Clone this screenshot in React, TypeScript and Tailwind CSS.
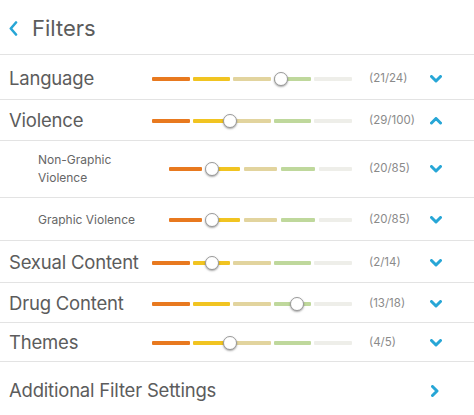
import React from "react";

const COLORS = ["#e8791f", "#f1c421", "#e2d49e", "#bfd89c", "#eeeee9"];

function Chevron({ dir }: { dir: "down" | "up" | "right" | "left" }) {
  if (dir === "left") {
    return (
      <svg width="9" height="15" viewBox="0 0 9 15">
        <polyline points="7,1.5 1.8,7.5 7,13.5" fill="none" stroke="#27a6d6" strokeWidth="2.6" strokeLinecap="round" strokeLinejoin="round" />
      </svg>
    );
  }
  const pts =
    dir === "down"
      ? "1.5,1.5 6,6 10.5,1.5"
      : dir === "up"
      ? "1.5,6 6,1.5 10.5,6"
      : "1.5,1.5 6,6 1.5,10.5";
  const w = dir === "down" || dir === "up" ? 12 : 8;
  const h = dir === "down" || dir === "up" ? 8 : 12;
  return (
    <svg width={w} height={h} viewBox={`0 0 ${w} ${h}`}>
      <polyline points={pts} fill="none" stroke="#27a6d6" strokeWidth="3" strokeLinecap="round" strokeLinejoin="round" />
    </svg>
  );
}

function Slider({ thumb, sub }: { thumb: number; sub?: boolean }) {
  return (
    <div className={`relative flex items-center ${sub ? "w-[183px] gap-[4px]" : "w-[200px] gap-[3px]"} h-[16px]`}>
      {COLORS.map((c, i) => (
        <div key={i} className="flex-1 h-[4px] rounded-[1px]" style={{ backgroundColor: c }} />
      ))}
      <div
        className="absolute top-[1px] w-[14px] h-[14px] rounded-full bg-white border border-[#9a9a9a] shadow-[0_1px_2px_rgba(0,0,0,0.35)]"
        style={{ left: thumb - 7 }}
      />
    </div>
  );
}

function Row({
  label,
  thumb,
  count,
  dir,
  h,
  sub,
}: {
  label: React.ReactNode;
  thumb: number;
  count: string;
  dir: "down" | "up";
  h: string;
  sub?: boolean;
}) {
  return (
    <div className={`flex items-center border-b border-[#e3e3e3] ${h}`}>
      {sub ? (
        <div className="pl-[38px] w-[169px] text-[12px] leading-[18px] text-[#666]">{label}</div>
      ) : (
        <div className="pl-[9px] w-[152px] text-[18.5px] text-[#5c5c5c] tracking-[-0.2px]">{label}</div>
      )}
      <Slider thumb={thumb} sub={sub} />
      <div className="ml-[17px] w-[60px] text-[11.5px] text-[#8a8a8a]">{count}</div>
      <div className="ml-[1px] flex w-[12px] justify-center">
        <Chevron dir={dir} />
      </div>
    </div>
  );
}

export default function App() {
  return (
    <div className="w-[474px] h-[415px] bg-white overflow-hidden" style={{ fontFamily: "Inter, 'Noto Sans', sans-serif" }}>
      <div className="flex items-center h-[55px] border-b border-[#e3e3e3] pt-[2px]">
        <div className="pl-[9px] pr-[14px] flex items-center">
          <Chevron dir="left" />
        </div>
        <div className="text-[22px] text-[#5c5c5c]">Filters</div>
      </div>
      <Row label="Language" thumb={129} count="(21/24)" dir="down" h="h-[45px] pt-[4px]" />
      <Row label="Violence" thumb={78} count="(29/100)" dir="up" h="h-[41px] pt-[1px]" />
      <Row
        label={
          <>
            Non-Graphic
            <br />
            Violence
          </>
        }
        thumb={43}
        count="(20/85)"
        dir="down"
        h="h-[57px]"
        sub
      />
      <Row label="Graphic Violence" thumb={43} count="(20/85)" dir="down" h="h-[43px] pt-[1px]" sub />
      <Row label="Sexual Content" thumb={60} count="(2/14)" dir="down" h="h-[42px] pt-[2px]" />
      <Row label="Drug Content" thumb={145} count="(13/18)" dir="down" h="h-[40px] pt-[2px]" />
      <Row label="Themes" thumb={78} count="(4/5)" dir="down" h="h-[39px] pt-[2px]" />
      <div className="flex items-center h-[56px] pt-[2px]">
        <div className="pl-[9px] w-[431px] text-[18.5px] text-[#5c5c5c] tracking-[-0.2px]">Additional Filter Settings</div>
        <Chevron dir="right" />
      </div>
    </div>
  );
}
